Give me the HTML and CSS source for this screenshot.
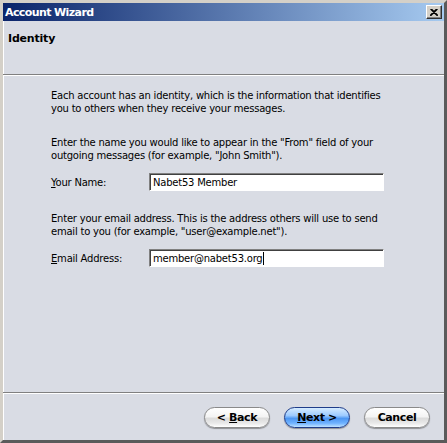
FILE: index.html
```html
<!DOCTYPE html>
<html>
<head>
<meta charset="utf-8">
<title>Account Wizard</title>
<link rel="stylesheet" href="styles.css">
</head>
<body>
<div class="window">
  <div class="titlebar">
    <span class="title">Account Wizard</span>
    <span class="close">
      <svg width="8" height="7" viewBox="0 0 8 7"><path d="M0.5 0 L7.5 7 M1.5 0 L8 6.5 M7.5 0 L0.5 7 M6.5 0 L0 6.5" stroke="#000" stroke-width="1.1" fill="none"/></svg>
    </span>
  </div>
  <div class="client">
    <div class="header"><h1 class="heading">Identity</h1></div>
    <div class="sep"></div>
    <div class="content">
      <p class="para">Each account has an identity, which is the information that identifies<br>you to others when they receive your messages.</p>
      <p class="para gap">Enter the name you would like to appear in the "From" field of your<br>outgoing messages (for example, "John Smith").</p>
      <div class="row">
        <label class="label"><u>Y</u>our Name:</label>
        <div class="field">Nabet53 Member</div>
      </div>
      <p class="para gap">Enter your email address. This is the address others will use to send<br>email to you (for example, "user@example.net").</p>
      <div class="row">
        <label class="label"><u>E</u>mail Address:</label>
        <div class="field">member@nabet53.org<span class="caret"></span></div>
      </div>
    </div>
    <div class="sep"></div>
    <div class="buttons">
      <button class="btn">&lt; <u>B</u>ack</button>
      <button class="btn primary"><u>N</u>ext &gt;</button>
      <button class="btn">Cancel</button>
    </div>
  </div>
</div>
</body>
</html>
```
FILE: styles.css
```css
* { box-sizing: border-box; }
html, body { margin: 0; padding: 0; }
body {
  width: 447px;
  height: 443px;
  font-family: "DejaVu Sans", Verdana, sans-serif;
  font-size: 11px;
  background: #d4d0c8;
}
.window {
  width: 447px;
  height: 443px;
  display: flex;
  flex-direction: column;
  background: #d9dce4;
  border-top: 3px solid #d4d0c8;
  border-left: 3px solid #d4d0c8;
  border-right: 3px solid #5a5a5a;
  border-bottom: 3px solid #5a5a5a;
  box-shadow: inset 1px 1px 0 #ffffff;
}
.titlebar {
  height: 18px;
  flex: none;
  display: flex;
  align-items: center;
  justify-content: space-between;
  padding: 0 2px 0 2px;
  background: linear-gradient(to right, #0a246a, #a6caf0);
}
.title {
  color: #fff;
  font-family: "DejaVu Sans", sans-serif;
  font-weight: bold;
  font-size: 11px;
  letter-spacing: -0.6px;
}
.close {
  flex: none;
  width: 16px;
  height: 14px;
  display: flex;
  align-items: center;
  justify-content: center;
  background: #d4d0c8;
  border-top: 1px solid #ffffff;
  border-left: 1px solid #ffffff;
  border-right: 1px solid #303030;
  border-bottom: 1px solid #303030;
  box-shadow: inset -1px -1px 0 #808080;
}
.close svg { display: block; }
.client {
  flex: 1;
  display: flex;
  flex-direction: column;
}
.header {
  height: 53px;
  flex: none;
  padding: 11px 0 0 5px;
}
.heading {
  margin: 0;
  font-size: 11px;
  line-height: 13px;
  font-weight: bold;
  color: #000;
  letter-spacing: -0.2px;
}
.sep {
  height: 2px;
  flex: none;
  border-top: 1px solid #808080;
  border-bottom: 1px solid #ffffff;
}
.content {
  flex: 1;
  padding: 13px 0 0 48px;
  color: #000;
  font-size: 10px;
  line-height: 13px;
  letter-spacing: -0.22px;
}
.para { margin: 0; }
.para.gap { margin-top: 21px; }
.row {
  display: flex;
  align-items: center;
  margin-top: 11px;
  height: 18px;
}
.label { width: 98px; flex: none; }
.field {
  width: 235px;
  height: 18px;
  background: #fff;
  border-top: 1px solid #808080;
  border-left: 1px solid #808080;
  border-right: 1px solid #ffffff;
  border-bottom: 1px solid #ffffff;
  box-shadow: inset 1px 1px 0 #404040;
  padding: 1px 3px 0 3px;
  line-height: 15px;
  display: flex;
  align-items: center;
}
.caret {
  display: inline-block;
  width: 1px;
  height: 13px;
  background: #000;
  margin-left: 1px;
}
.buttons {
  height: 46px;
  flex: none;
  display: flex;
  justify-content: flex-end;
  gap: 14px;
  padding: 13px 14px 0 0;
}
.btn {
  width: 66px;
  height: 21px;
  border-radius: 11px;
  border: 1px solid #8a8a8a;
  background: linear-gradient(to bottom, #ffffff 0%, #f4f4f4 45%, #dcdcdc 55%, #e9e9e9 80%, #ffffff 100%);
  box-shadow: 0 1px 1px rgba(0,0,0,0.35);
  font-family: "DejaVu Sans", sans-serif;
  font-weight: bold;
  font-size: 11px;
  letter-spacing: -0.4px;
  color: #000;
  padding: 0;
}
.btn.primary {
  border-color: #1f3d8a;
  background: linear-gradient(to bottom, #d6ecff 0%, #9ccaff 40%, #4e97f2 55%, #6fb2ff 80%, #bfe2ff 100%);
}
```
